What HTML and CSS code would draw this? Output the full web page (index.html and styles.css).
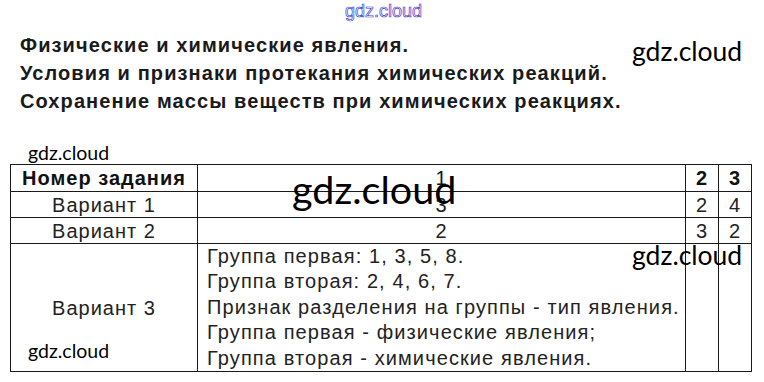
FILE: index.html
```html
<!DOCTYPE html>
<html lang="ru">
<head>
<meta charset="utf-8">
<link rel="stylesheet" href="styles.css">
</head>
<body>
<div class="page">
  <div class="titles">
    <div class="title-line">Физические и химические явления.</div>
    <div class="title-line">Условия и признаки протекания химических реакций.</div>
    <div class="title-line">Сохранение массы веществ при химических реакциях.</div>
  </div>
  <table class="answers">
    <tr class="head">
      <td class="c1">Номер задания</td>
      <td class="c2">1</td>
      <td class="c3">2</td>
      <td class="c4">3</td>
    </tr>
    <tr class="row">
      <td class="c1">Вариант 1</td>
      <td class="c2">3</td>
      <td class="c3">2</td>
      <td class="c4">4</td>
    </tr>
    <tr class="row">
      <td class="c1">Вариант 2</td>
      <td class="c2">2</td>
      <td class="c3">3</td>
      <td class="c4">2</td>
    </tr>
    <tr class="row tall">
      <td class="c1">Вариант 3</td>
      <td class="c2 list">
        <div>Группа первая: 1, 3, 5, 8.</div>
        <div>Группа вторая: 2, 4, 6, 7.</div>
        <div>Признак разделения на группы - тип явления.</div>
        <div>Группа первая - физические явления;</div>
        <div>Группа вторая - химические явления.</div>
      </td>
      <td class="c3"></td>
      <td class="c4"></td>
    </tr>
  </table>
  <div class="wm wm-top">gdz.cloud</div>
  <div class="wm wm-r1">gdz.cloud</div>
  <div class="wm wm-l1">gdz.cloud</div>
  <div class="wm wm-big">gdz.cloud</div>
  <div class="wm wm-r2">gdz.cloud</div>
  <div class="wm wm-l2">gdz.cloud</div>
</div>
</body>
</html>
```
FILE: styles.css
```css
html, body {
  margin: 0;
  padding: 0;
  background: #ffffff;
}
.page {
  position: relative;
  width: 764px;
  height: 382px;
  overflow: hidden;
  font-family: "Liberation Sans", Arial, sans-serif;
  color: #1a1a1a;
}
.titles {
  padding: 31px 0 0 20px;
}
.title-line {
  font-weight: bold;
  font-size: 20px;
  letter-spacing: 1.1px;
  line-height: 28px;
  height: 28px;
}
.answers {
  margin: 49px 0 0 10px;
  border-collapse: collapse;
  table-layout: fixed;
  width: 742px;
  font-size: 20px;
  letter-spacing: 1px;
}
.answers td {
  border: 1px solid #1a1a1a;
  padding: 0;
  text-align: center;
  vertical-align: middle;
  line-height: 24px;
  color: #222;
}
.head td {
  height: 26px;
  font-weight: bold;
  color: #111;
}
.head .c2 { font-weight: normal; }
.row td { height: 25px; }
.row.tall td { height: 127px; }
.head .c1 { width: 186px; }
.head .c2 { width: 487px; }
.head .c3 { width: 32px; }
.answers td.list {
  text-align: left;
  padding: 0 0 0 9px;
  line-height: 25.4px;
  letter-spacing: 1.1px;
  white-space: nowrap;
}
.wm {
  position: absolute;
  font-family: Lato, "Open Sans", sans-serif;
  color: #000;
  white-space: nowrap;
  line-height: 1;
}
.wm-top {
  left: 345px;
  top: 2px;
  font-family: "Liberation Sans", Arial, sans-serif;
  font-size: 18px;
  color: #ffffff;
  -webkit-text-stroke: 0.7px #3c3cc8;
}
.wm-r1 { left: 632px; top: 38px; font-size: 26.5px; }
.wm-l1 { left: 28px; top: 143px; font-size: 19.5px; }
.wm-big { left: 292px; top: 169px; font-size: 39.5px; }
.wm-r2 { left: 632px; top: 242px; font-size: 26.5px; }
.wm-l2 { left: 28px; top: 341px; font-size: 19.5px; }
```
